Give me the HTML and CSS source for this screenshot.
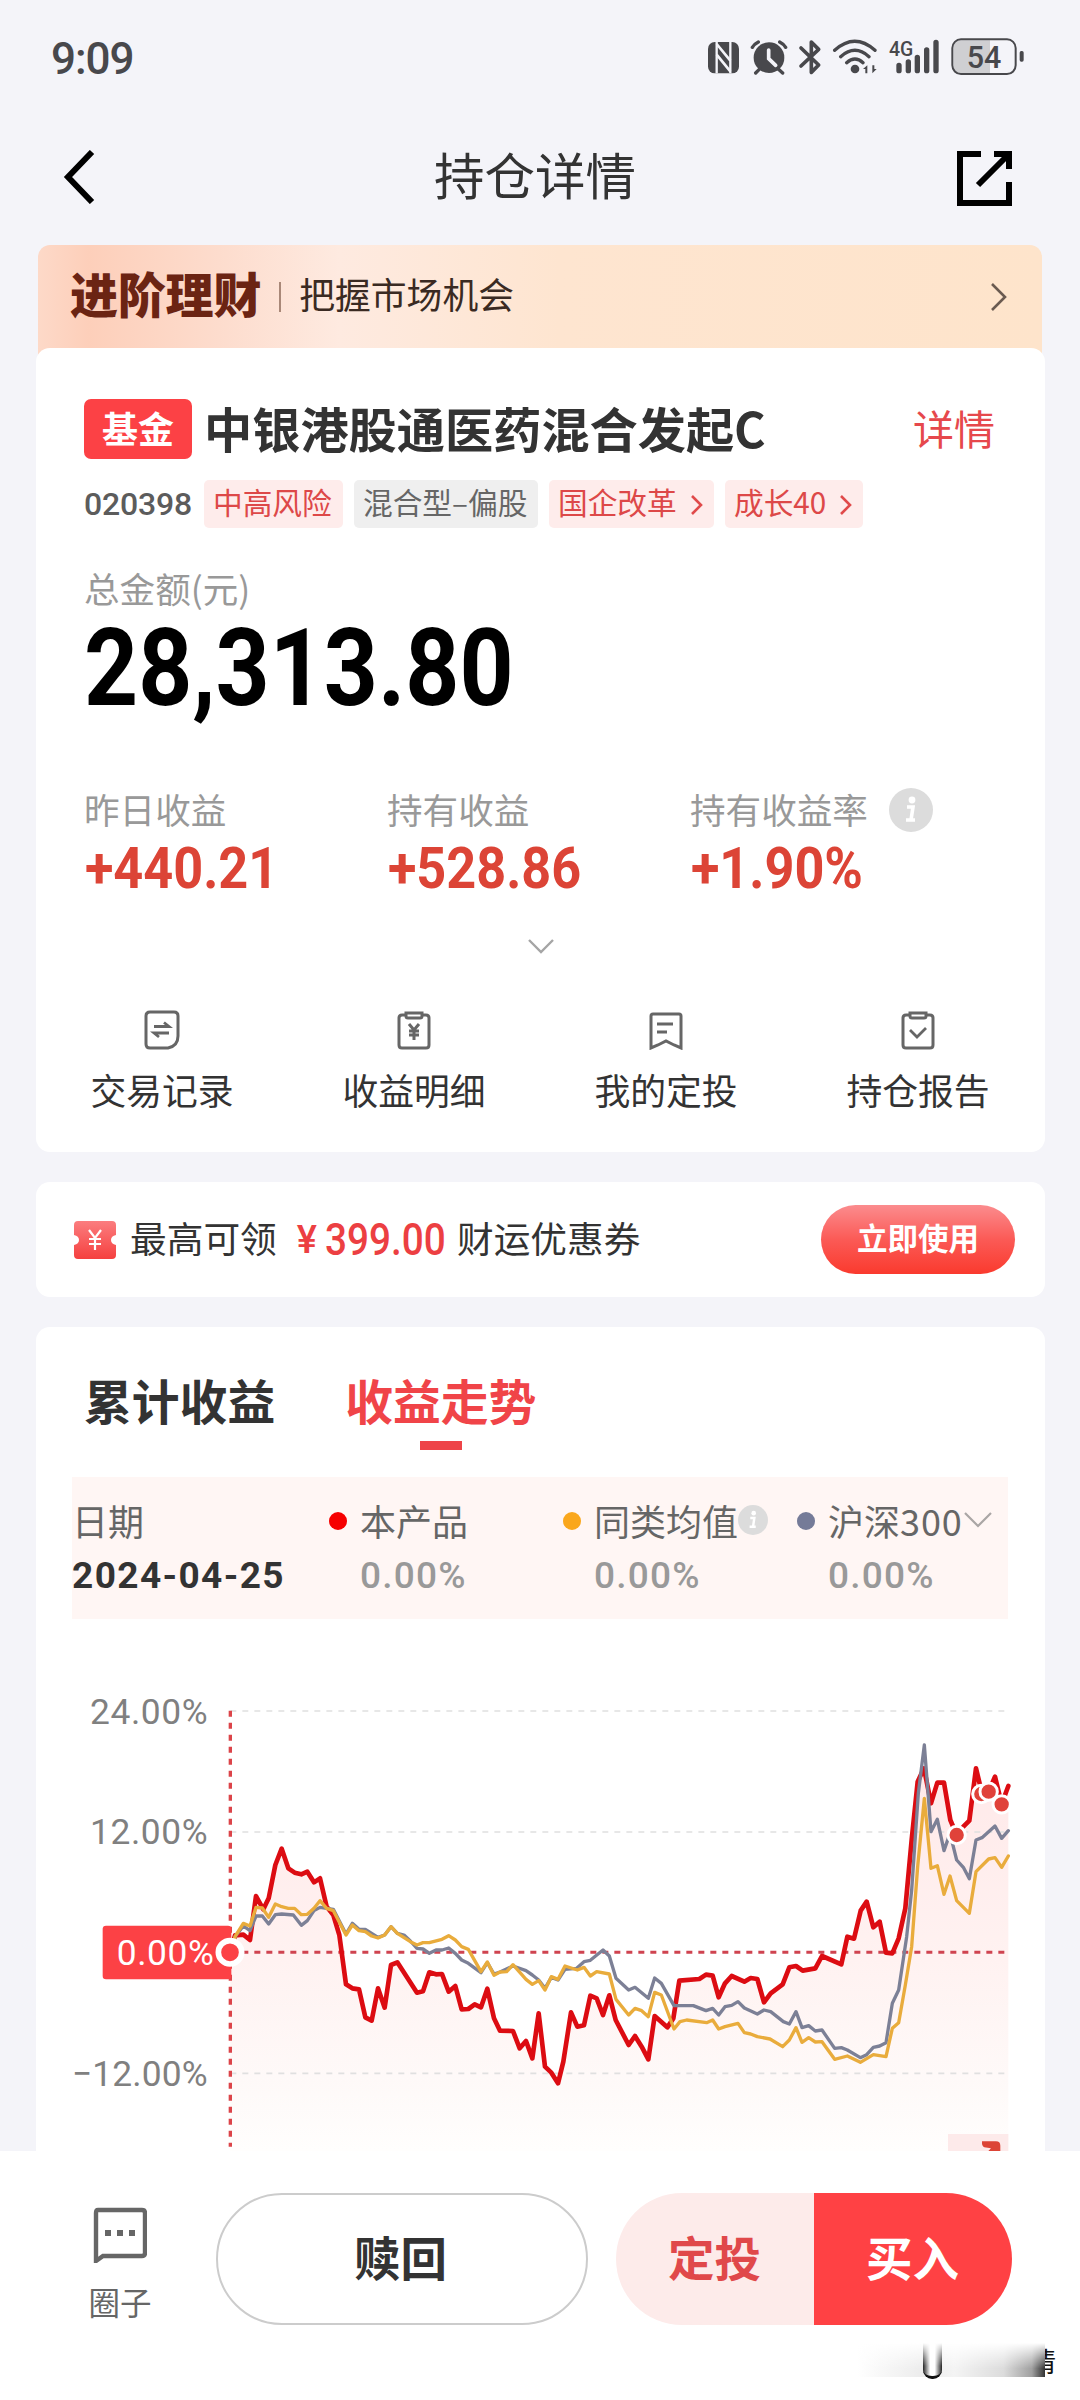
FILE: index.html
```
<!DOCTYPE html>
<html lang="zh-CN">
<head>
    <meta charset="UTF-8">
    <meta name="viewport" content="width=device-width, initial-scale=1.0">
    <title>持仓详情</title>
    <link rel="stylesheet" href="styles.css">
</head>
<body>
    <div class="status">
        <span class="time">9:09</span>
        <svg class="status-icons" viewBox="72 48 966 120">
            <!-- nfc -->
            <rect x="84" y="66" width="93" height="94" rx="20" fill="#48484c"/>
            <path d="M110 66v94M151 66v94" stroke="#f4f4f9" stroke-width="7"/>
            <path d="M110 72l41 50M110 104l41 50" stroke="#f4f4f9" stroke-width="8"/>
            <!-- alarm -->
            <circle cx="267" cy="113" r="46" fill="#48484c"/>
            <path d="M217 82q6-10 18-16M317 82q-6-10-18-16M240 146l-13 13M294 146l14 13" fill="none" stroke="#48484c" stroke-width="10" stroke-linecap="round"/>
            <path d="M266 90v26l21 20" fill="none" stroke="#f4f4f9" stroke-width="11" stroke-linecap="round"/>
            <!-- bluetooth -->
            <path d="M363 84l53 51-22 22V66l22 22-53 50" fill="none" stroke="#48484c" stroke-width="11" stroke-linejoin="round" stroke-linecap="round"/>
            <!-- wifi -->
            <path d="M464 91q60-54 121 0M482 110q43-38 85 0M500 128q25-22 49 0" fill="none" stroke="#48484c" stroke-width="10" stroke-linecap="round"/>
            <circle cx="525" cy="147" r="13" fill="#48484c"/>
            <path d="M549 147l13-11v24h-6v-13zM590 147l-13 13v-24h6v11z" fill="#48484c"/>
            <!-- signal -->
            <text class="net" x="627" y="107" textLength="73" lengthAdjust="spacingAndGlyphs">4G</text>
            <path d="M657 136v16M685 126v26M712 112v40M740 90v62M768 67v85" stroke="#48484c" stroke-width="16" stroke-linecap="round"/>
            <!-- battery -->
            <rect x="818" y="58" width="189" height="104" rx="26" fill="#f4f4f9"/>
            <path d="M844 61h86v98h-86q-23 0-23-23v-52q0-23 23-23z" fill="#cfcfd2"/>
            <rect x="817" y="58" width="190" height="104" rx="26" fill="none" stroke="#48484c" stroke-width="6"/>
            <rect x="1019" y="93" width="12" height="32" rx="5" fill="#48484c"/>
            <text class="level" x="860" y="143" textLength="104" lengthAdjust="spacingAndGlyphs">54</text>
        </svg>
    </div>

    <header class="nav">
        <svg class="back" viewBox="0 0 32 54"><path d="M29 2L5 27l24 25" fill="none" stroke="#000" stroke-width="6"/></svg>
        <h1>持仓详情</h1>
        <svg class="share" viewBox="0 0 55 55">
            <path d="M24 3H3v49h49V31M37 3h15v15M50 5L21 34" fill="none" stroke="#000" stroke-width="6"/>
        </svg>
    </header>

    <div class="banner">
        <strong>进阶理财</strong>
        <i></i>
        <span>把握市场机会</span>
        <svg class="banner-arrow" viewBox="0 0 18 30"><path d="M2 2l13 13L2 28" fill="none" stroke="#6a5a50" stroke-width="2.6"/></svg>
    </div>

    <section class="card fund">
        <div class="fund-head">
            <span class="badge">基金</span>
            <h2>中银港股通医药混合发起C</h2>
            <a class="detail">详情</a>
        </div>
        <div class="tags">
            <span class="code">020398</span>
            <span class="tag t1">中高风险</span>
            <span class="tag grey t2">混合型–偏股</span>
            <span class="tag t3">国企改革<svg viewBox="0 0 14 22"><path d="M2 2l9 9-9 9" fill="none" stroke="#e04a4a" stroke-width="2.6"/></svg></span>
            <span class="tag t4">成长40<svg viewBox="0 0 14 22"><path d="M2 2l9 9-9 9" fill="none" stroke="#e04a4a" stroke-width="2.6"/></svg></span>
        </div>
        <div class="total-label">总金额(元)</div>
        <div class="total"><span>28,313.80</span></div>
        <div class="stats">
            <div>
                <p>昨日收益</p>
                <b>+440.21</b>
            </div>
            <div>
                <p>持有收益</p>
                <b>+528.86</b>
            </div>
            <div>
                <p>持有收益率<svg class="info" viewBox="0 0 44 44"><circle cx="22" cy="22" r="22" fill="#dcdcdc"/><circle cx="23" cy="12" r="3.4" fill="#fff"/><path d="M18 19h6l-2 13M17 32h9" fill="none" stroke="#fff" stroke-width="3.6"/></svg></p>
                <b>+1.90%</b>
            </div>
        </div>
        <svg class="more" viewBox="0 0 26 16"><path d="M1 2l12 12L25 2" fill="none" stroke="#a5a5a5" stroke-width="2.4"/></svg>
        <div class="actions">
            <div>
                <svg viewBox="0 0 38 40"><path d="M7 2h24q4 0 4 4v20q0 10-10 12H7q-4 0-4-4V6q0-4 4-4z" fill="none" stroke="#666" stroke-width="3"/><path d="M11 16.500h15l-5-4M26 23H11l5 4" fill="none" stroke="#666" stroke-width="2.8"/></svg>
                <span>交易记录</span>
            </div>
            <div>
                <svg viewBox="0 0 38 40"><path d="M11 5H7q-3 0-3 3v27q0 3 3 3h24q3 0 3-3V8q0-3-3-3h-4M11 3h16v3q0 2-2 2H13q-2 0-2-2z" fill="none" stroke="#666" stroke-width="3"/><path d="M14 14l5 6 5-6M19 20v10M14 21h10M14 25h10" fill="none" stroke="#666" stroke-width="3"/></svg>
                <span>收益明细</span>
            </div>
            <div>
                <svg viewBox="0 0 38 40"><path d="M6 4h26q2 0 2 2v32l-7-3-8-4-8 4-7 3V6q0-2 2-2z" fill="none" stroke="#666" stroke-width="3"/><path d="M10 14h16M10 22h10" stroke="#666" stroke-width="3"/></svg>
                <span>我的定投</span>
            </div>
            <div>
                <svg viewBox="0 0 38 40"><path d="M11 5H7q-3 0-3 3v27q0 3 3 3h24q3 0 3-3V8q0-3-3-3h-4M11 3h16v3q0 2-2 2H13q-2 0-2-2z" fill="none" stroke="#666" stroke-width="3"/><path d="M11 20l7 7 9-9" fill="none" stroke="#666" stroke-width="2.8"/></svg>
                <span>持仓报告</span>
            </div>
        </div>
    </section>

    <section class="card coupon">
        <svg class="ticket" viewBox="0 0 42 38">
            <defs><linearGradient id="tk" x1="0" y1="0" x2="0" y2="1"><stop offset="0" stop-color="#fb7d7f"/><stop offset="1" stop-color="#f5403f"/></linearGradient></defs>
            <path d="M4 0h34q4 0 4 4v10q-5 1-5 5t5 5v10q0 4-4 4H4q-4 0-4-4V24q5-1 5-5t-5-5V4q0-4 4-4z" fill="url(#tk)"/>
            <path d="M15 9l6 8 6-8M21 17v12M15 18h12M15 23h12" fill="none" stroke="#fff" stroke-width="2.2"/>
        </svg>
        <span class="c1">最高可领</span>
        <b class="yen">¥</b>
        <b class="price">399.00</b>
        <span class="c2">财运优惠券</span>
        <button class="use">立即使用</button>
    </section>

    <section class="card trend">
        <div class="tabs">
            <span>累计收益</span>
            <span class="active">收益走势</span>
        </div>
        <div class="legend">
            <div class="col date">
                <p>日期</p>
                <b>2024-04-25</b>
            </div>
            <div class="col">
                <p><i class="red"></i>本产品</p>
                <b>0.00%</b>
            </div>
            <div class="col">
                <p><i class="gold"></i>同类均值<svg class="info-s" viewBox="0 0 44 44"><circle cx="22" cy="22" r="22" fill="#dcdcdc"/><circle cx="23" cy="12" r="3.4" fill="#fff"/><path d="M18 19h6l-2 13M17 32h9" fill="none" stroke="#fff" stroke-width="3.6"/></svg></p>
                <b>0.00%</b>
            </div>
            <div class="col">
                <p><i class="blue"></i>沪深<em>300</em><svg class="down" viewBox="0 0 28 16"><path d="M1 1l13 13L27 1" fill="none" stroke="#aaa6a5" stroke-width="2.2"/></svg></p>
                <b>0.00%</b>
            </div>
        </div>
        <svg class="chart" viewBox="0 0 2952 1473">
            <defs>
                <linearGradient id="area" gradientUnits="userSpaceOnUse" x1="0" y1="320" x2="0" y2="1473">
                    <stop offset="0" stop-color="#ffe9e9"/>
                    <stop offset="0.5" stop-color="#fff2f1"/>
                    <stop offset="0.85" stop-color="#fefaf9"/>
                    <stop offset="1" stop-color="#fffefd"/>
                </linearGradient>
            </defs>
            <polygon fill="url(#area)" points="511,1473 511,877 525,826 550,824 570,840 588,708 610,748 626,715 646,615 665,566 685,625 704,638 724,643 742,635 762,667 780,655 800,740 820,765 838,825 858,973 877,985 897,988 916,1072 935,1082 954,985 974,1043 993,915 1012,907 1071,998 1089,994 1108,937 1128,943 1146,942 1166,995 1186,978 1205,1048 1225,1047 1244,1033 1263,1042 1282,986 1302,1075 1320,1112 1359,1113 1379,1165 1398,1143 1417,1195 1436,1060 1455,1220 1474,1238 1494,1270 1510,1205 1533,1057 1552,1100 1572,1096 1591,1007 1610,1015 1629,1065 1648,1006 1667,1080 1706,1155 1725,1128 1745,1160 1765,1198 1784,1068 1822,1102 1840,1075 1858,962 1918,957 1938,944 1958,947 1976,1012 1995,970 2015,948 2053,965 2072,954 2092,957 2112,1027 2132,1000 2168,973 2188,922 2208,918 2228,932 2266,925 2286,888 2344,913 2362,830 2382,836 2402,752 2420,725 2440,802 2459,785 2478,878 2497,880 2516,835 2536,745 2555,540 2573,365 2592,325 2613,430 2632,368 2652,368 2671,480 2690,525 2710,500 2728,482 2748,325 2766,400 2786,395 2805,350 2825,432 2845,378 2845,1473"/>
            <path class="grid" d="M511 153H2845M511 516H2845M511 1240H2845"/>
            <path class="zero" d="M547 877H2835"/>
            <path class="cursor" d="M511 152V1460"/>
            <polyline class="line-red" points="511,877 525,826 550,824 570,840 588,708 610,748 626,715 646,615 665,566 685,625 704,638 724,643 742,635 762,667 780,655 800,740 820,765 838,825 858,973 877,985 897,988 916,1072 935,1082 954,985 974,1043 993,915 1012,907 1071,998 1089,994 1108,937 1128,943 1146,942 1166,995 1186,978 1205,1048 1225,1047 1244,1033 1263,1042 1282,986 1302,1075 1320,1112 1359,1113 1379,1165 1398,1143 1417,1195 1436,1060 1455,1220 1474,1238 1494,1270 1510,1205 1533,1057 1552,1100 1572,1096 1591,1007 1610,1015 1629,1065 1648,1006 1667,1080 1706,1155 1725,1128 1745,1160 1765,1198 1784,1068 1822,1102 1840,1075 1858,962 1918,957 1938,944 1958,947 1976,1012 1995,970 2015,948 2053,965 2072,954 2092,957 2112,1027 2132,1000 2168,973 2188,922 2208,918 2228,932 2266,925 2286,888 2344,913 2362,830 2382,836 2402,752 2420,725 2440,802 2459,785 2478,878 2497,880 2516,835 2536,745 2555,540 2573,365 2592,325 2613,430 2632,368 2652,368 2671,480 2690,525 2710,500 2728,482 2748,325 2766,400 2786,395 2805,350 2825,432 2845,378"/>
            <polyline class="line-blue" points="511,877 525,830 550,798 570,812 588,768 607,768 626,792 646,764 665,762 700,765 724,796 742,782 762,752 780,742 820,748 858,822 877,790 897,808 916,808 954,832 974,825 993,800 1012,820 1032,825 1051,843 1071,865 1089,867 1108,880 1128,870 1146,870 1166,864 1186,880 1205,900 1225,910 1263,938 1282,908 1302,942 1320,936 1359,918 1398,932 1417,945 1436,960 1455,985 1474,952 1494,960 1515,928 1550,925 1572,905 1591,901 1629,870 1648,888 1668,955 1706,990 1725,982 1765,1015 1784,954 1804,970 1842,1037 1900,1037 1938,1052 1958,1045 1976,1065 1995,1040 2015,1036 2034,1025 2053,1044 2092,1062 2112,1050 2132,1055 2170,1085 2188,1092 2208,1055 2226,1103 2246,1097 2266,1113 2286,1110 2324,1165 2344,1163 2362,1170 2401,1193 2420,1184 2440,1162 2459,1158 2478,1148 2497,1030 2516,990 2540,830 2555,690 2575,400 2593,255 2613,515 2632,478 2652,572 2670,520 2690,600 2710,622 2728,656 2748,540 2766,533 2805,498 2825,535 2845,512"/>
            <polyline class="line-gold" points="511,877 525,830 550,790 570,798 588,742 607,744 626,772 646,732 665,740 685,745 704,745 724,764 742,763 762,745 780,722 800,745 820,752 858,825 877,795 897,812 916,815 935,828 954,834 974,825 993,800 1012,820 1051,845 1071,855 1089,848 1108,848 1146,838 1166,827 1186,840 1205,860 1225,868 1263,935 1282,906 1302,946 1320,936 1340,935 1359,914 1398,958 1417,973 1436,962 1455,990 1474,950 1494,958 1515,918 1552,930 1572,922 1591,948 1610,935 1648,942 1668,1018 1706,1065 1725,1045 1745,1052 1765,1070 1784,997 1804,1005 1842,1107 1860,1085 1880,1080 1940,1088 1958,1080 1976,1107 1995,1100 2034,1090 2053,1118 2072,1122 2092,1130 2130,1137 2168,1160 2188,1140 2208,1103 2226,1147 2246,1133 2266,1146 2286,1145 2324,1198 2362,1188 2401,1207 2440,1184 2478,1190 2497,1105 2516,1088 2536,975 2555,860 2573,620 2593,415 2613,625 2632,617 2652,703 2670,648 2690,722 2728,760 2748,635 2786,597 2805,593 2825,622 2845,588"/>
            <g class="marks">
                <circle cx="2690" cy="525" r="26"/>
                <circle cx="2764" cy="402" r="26"/>
                <circle cx="2786" cy="395" r="26"/>
                <circle cx="2825" cy="433" r="26"/>
            </g>
            <rect x="128" y="797" width="386" height="161" rx="10" fill="#fc4145"/>
            <circle cx="510" cy="877" r="35" fill="#fc4145" stroke="#fff" stroke-width="17"/>
            <text class="axis now" x="170" y="914" textLength="292">0.00%</text>
            <text class="axis" x="90" y="192" textLength="353">24.00%</text>
            <text class="axis" x="90" y="552" textLength="353">12.00%</text>
            <text class="axis" x="36" y="1277" textLength="407">−12.00%</text>
            <rect x="2664" y="1422" width="181" height="51" fill="#fdeaea"/>
            <path d="M2766 1444h42q13 0 13 13v16h-36l8-8-20-3q-8-3-7-18z" fill="#dc4436"/>
        </svg>
    </section>

    <footer class="bar">
        <div class="circle">
            <svg viewBox="0 0 54 56"><path d="M5 3h44q3 0 3 3v40q0 3-3 3H10l-7 5V6q0-3 2-3z" fill="none" stroke="#666" stroke-width="4.4"/><path d="M12 26h6M24 26h6M36 26h6" stroke="#666" stroke-width="6"/></svg>
            <span>圈子</span>
        </div>
        <button class="redeem">赎回</button>
        <div class="buy">
            <button class="plan">定投</button>
            <button class="now-buy">买入</button>
        </div>
        <div class="mark"><span>情</span><u></u><i></i></div>
    </footer>
</body>
</html>
```
FILE: styles.css
```
*{
    margin:0;
    padding:0;
    box-sizing:border-box;
}
body{
    width:1080px;
    height:2400px;
    overflow:hidden;
    background:#f4f4f9;
    font-family:"Noto Sans CJK SC", sans-serif;
    color:#333;
}
svg{
    display:block;
    flex:none;
}
button{
    border:none;
    font-family:inherit;
}
.status{
    height:116px;
    padding:0 54px 0 51px;
    display:flex;
    justify-content:space-between;
}
.time{
    font:500 44px/44px Roboto, sans-serif;
    color:#48484c;
    padding-top:37px;
    letter-spacing:-1px;
}
.status-icons{
    width:322px;
    height:40px;
    margin-top:36px;
}
.net{
    font:500 62px Roboto, sans-serif;
    fill:#48484c;
}
.level{
    font:500 94px Roboto, sans-serif;
    fill:#48484c;
}
.nav{
    height:129px;
    padding:0 68px 10px 63px;
    display:flex;
    align-items:center;
    justify-content:space-between;
}
.back{
    width:32px;
    height:54px;
    margin:3px 18px 0 0;
}
.share{
    width:55px;
    height:55px;
    margin-top:6px;
}
h1{
    font-size:50.5px;
    font-weight:400;
    line-height:60px;
    margin-top:-6px;
}
.banner{
    height:115px;
    margin:0 38px -12px;
    padding:0 34px 12px 32px;
    border-radius:12px 12px 0 0;
    background:linear-gradient(90deg,#fdd9c8 0,#fdcfba 5%,#fddccd 18%,#feeae0 30%,#fee5d0 52%,#fee4cb 100%);
    display:flex;
    align-items:center;
}
.banner strong{
    font-size:48px;
    font-weight:900;
    line-height:56px;
    letter-spacing:-.2px;
    color:#6b2413;
    margin-top:-9px;
}
.banner i{
    width:2px;
    height:30px;
    background:#a98878;
    margin:0 18px 0 18px;
}
.banner span{
    font-size:35.8px;
    line-height:44px;
    color:#3a2a22;
    margin-top:-7px;
}
.banner-arrow{
    width:18px;
    height:30px;
    margin-left:auto;
}
.card{
    background:#fff;
    border-radius:14px;
    margin:0 35px 0 36px;
}
.fund{
    position:relative;
    height:804px;
    padding:51px 48px 0;
}
.fund-head{
    height:60px;
    display:flex;
    align-items:center;
}
.badge{
    width:108px;
    height:60px;
    border-radius:7px;
    background:#fc4145;
    color:#fff;
    font-size:36px;
    font-weight:700;
    line-height:56px;
    text-align:center;
}
h2{
    font-size:48.2px;
    font-weight:700;
    line-height:60px;
    margin:-5px 0 0 12px;
}
.detail{
    margin:-5px 2px 0 auto;
    font-size:41px;
    color:#e6484c;
}
.tags{
    height:48px;
    margin-top:21px;
    display:flex;
    align-items:center;
}
.code{
    width:120px;
    font:500 32px/46px Roboto, sans-serif;
    color:#5c5c5c;
    letter-spacing:-.2px;
}
.tag{
    height:48px;
    line-height:44px;
    font-size:29.7px;
    padding-left:9px;
    border-radius:5px;
    background:#feeceb;
    color:#dd4848;
    margin-right:11px;
    display:flex;
    white-space:nowrap;
}
.tag svg{
    width:14px;
    height:22px;
    margin:14px 0 0 13px;
}
.grey{
    background:#efefef;
    color:#666;
}
.t1{ width:139px; }
.t2{ width:184px; }
.t3{ width:165px; }
.t4{ width:138px; }
.total-label{
    margin-top:38px;
    font-size:35.6px;
    line-height:44px;
    color:#999;
}
.total{
    height:124px;
}
.total span{
    display:inline-block;
    font:700 107px/118px Roboto, sans-serif;
    color:#000;
    transform:scaleX(.882);
    transform-origin:left;
}
.stats{
    margin-top:54px;
    display:grid;
    grid-template-columns:303px 303px 1fr;
}
.stats p{
    height:44px;
    line-height:42px;
    font-size:35.6px;
    color:#999;
    display:flex;
}
.stats b{
    display:inline-block;
    font:700 58px/73px Roboto, sans-serif;
    color:#dc4436;
    padding-left:1px;
    transform:scaleX(.9);
    transform-origin:left;
}
.info{
    width:44px;
    height:44px;
    margin-left:21px;
}
.more{
    width:26px;
    height:16px;
    margin:33px auto 0;
}
.actions{
    margin:56px -48px 0;
    display:grid;
    grid-template-columns:repeat(4,252px);
}
.actions div{
    display:flex;
    flex-direction:column;
    align-items:center;
}
.actions svg{
    width:38px;
    height:40px;
}
.actions span{
    margin-top:17px;
    font-size:35.8px;
    line-height:44px;
}
.coupon{
    height:115px;
    margin-top:30px;
    padding:0 30px 0 38px;
    display:flex;
    align-items:center;
}
.ticket{
    width:42px;
    height:38px;
    margin-right:14px;
}
.coupon span{
    font-size:36.7px;
    line-height:44px;
    margin-top:-5px;
}
.yen{
    font:500 38px/44px Roboto, sans-serif;
    color:#ec3f42;
    margin-left:20px;
}
.price{
    width:130px;
    font:500 44px/44px Roboto, sans-serif;
    color:#ec3f42;
    margin:0 2px 0 8px;
    transform:scaleX(.88);
    transform-origin:left;
}
.use{
    width:194px;
    height:69px;
    margin-left:auto;
    padding-bottom:5px;
    border-radius:35px;
    background:linear-gradient(#fb8c8e,#fb5a56 50%,#fa3a2e);
    color:#fff;
    font-size:30.5px;
    font-weight:700;
}
.trend{
    height:840px;
    margin-top:30px;
    padding:46px 1px 0 24px;
    border-radius:14px 14px 0 0;
}
.tabs{
    height:104px;
    padding-left:24px;
    display:flex;
    gap:70px;
}
.tabs span{
    font-size:47.8px;
    font-weight:700;
    line-height:54px;
}
.tabs .active{
    color:#f04448;
}
.active::after{
    content:"";
    display:block;
    width:42px;
    height:9px;
    margin:14px auto 0;
    background:#ee4448;
}
.legend{
    width:936px;
    height:142px;
    margin:0 0 0 12px;
    padding-top:21px;
    background:#fff6f4;
    display:grid;
    grid-template-columns:288px 234px 234px 180px;
}
.legend p{
    display:flex;
    align-items:center;
    font-size:36px;
    line-height:44px;
    height:44px;
    color:#666;
    white-space:nowrap;
}
.legend em{
    font-style:normal;
    letter-spacing:.9px;
}
.legend b{
    display:block;
    font:500 37px/54px Roboto, sans-serif;
    letter-spacing:1.2px;
    margin-top:7px;
    color:#999;
}
.legend .date b{
    color:#333;
    font-weight:700;
    letter-spacing:1.4px;
}
.legend i{
    width:18px;
    height:18px;
    border-radius:50%;
    margin:2px 13px 0 -31px;
}
.red{ background:#f60000; }
.gold{ background:#faa71c; }
.blue{ background:#757b98; }
.info-s{
    width:30px;
    height:30px;
}
.down{
    width:28px;
    height:16px;
    margin-left:1px;
}
.chart{
    width:984px;
    height:491px;
    margin-top:41px;
}
.grid{
    stroke:#e0e0e0;
    stroke-width:5;
    stroke-dasharray:18;
}
.zero{
    stroke:#cf4450;
    stroke-width:9;
    stroke-dasharray:18;
}
.cursor{
    stroke:#dc4449;
    stroke-width:10;
    stroke-dasharray:18;
}
polyline{
    fill:none;
    stroke-linejoin:round;
    stroke-linecap:round;
}
.line-red{
    stroke:#dc0c12;
    stroke-width:14;
}
.line-blue{
    stroke:#7c8096;
    stroke-width:10;
}
.line-gold{
    stroke:#e9ac3c;
    stroke-width:10;
}
.marks circle{
    fill:#e0423a;
    stroke:#fff;
    stroke-width:9;
}
.axis{
    font:400 106px Roboto, sans-serif;
    fill:#808080;
}
.now{
    fill:#fff;
}
.bar{
    position:relative;
    height:249px;
    margin-top:-16px;
    padding:42px 68px 0 88px;
    background:#fff;
    display:flex;
}
.circle{
    width:64px;
    padding-top:14px;
    color:#666;
    display:flex;
    flex-direction:column;
    align-items:center;
}
.circle svg{
    width:54px;
    height:56px;
}
.circle span{
    font-size:31.5px;
    line-height:40px;
    margin-top:18px;
}
.bar button{
    font-size:46.5px;
    font-weight:700;
    padding-bottom:8px;
}
.bar .redeem{
    width:372px;
    height:132px;
    margin:0 28px 0 64px;
    padding-right:3px;
    border:2px solid #ccc;
    border-radius:66px;
    background:#fff;
    color:#333;
}
.buy{
    display:flex;
    height:132px;
    border-radius:66px;
    overflow:hidden;
}
.buy button{
    width:198px;
    padding-right:1px;
}
.plan{
    background:#fdebea;
    color:#e0484a;
}
.now-buy{
    background:#ff4144;
    color:#fff;
}
/* faded corner stamp */
.mark{
    position:absolute;
    left:857px;
    top:192px;
    width:200px;
    height:36px;
}
.mark u{
    position:absolute;
    left:0;
    top:0;
    width:188px;
    height:34px;
    background:linear-gradient(#fff,rgba(255,255,255,0) 75%),linear-gradient(90deg,#fff 0,#ececec 35%,#f4f4f4 52%,#dcdcdc 78%,#a0a0a0 93%,#333);
}
.mark i{
    position:absolute;
    left:66px;
    top:0;
    width:19px;
    height:36px;
    border-radius:0 0 9px 9px;
    border-bottom:3px solid #111;
    background:linear-gradient(#fff,transparent 70%),linear-gradient(90deg,#222,#fff 38%,#fff 62%,#222);
}
.mark span{
    position:absolute;
    right:1px;
    top:6px;
    font-size:27px;
    line-height:24px;
    color:#111;
}
```
